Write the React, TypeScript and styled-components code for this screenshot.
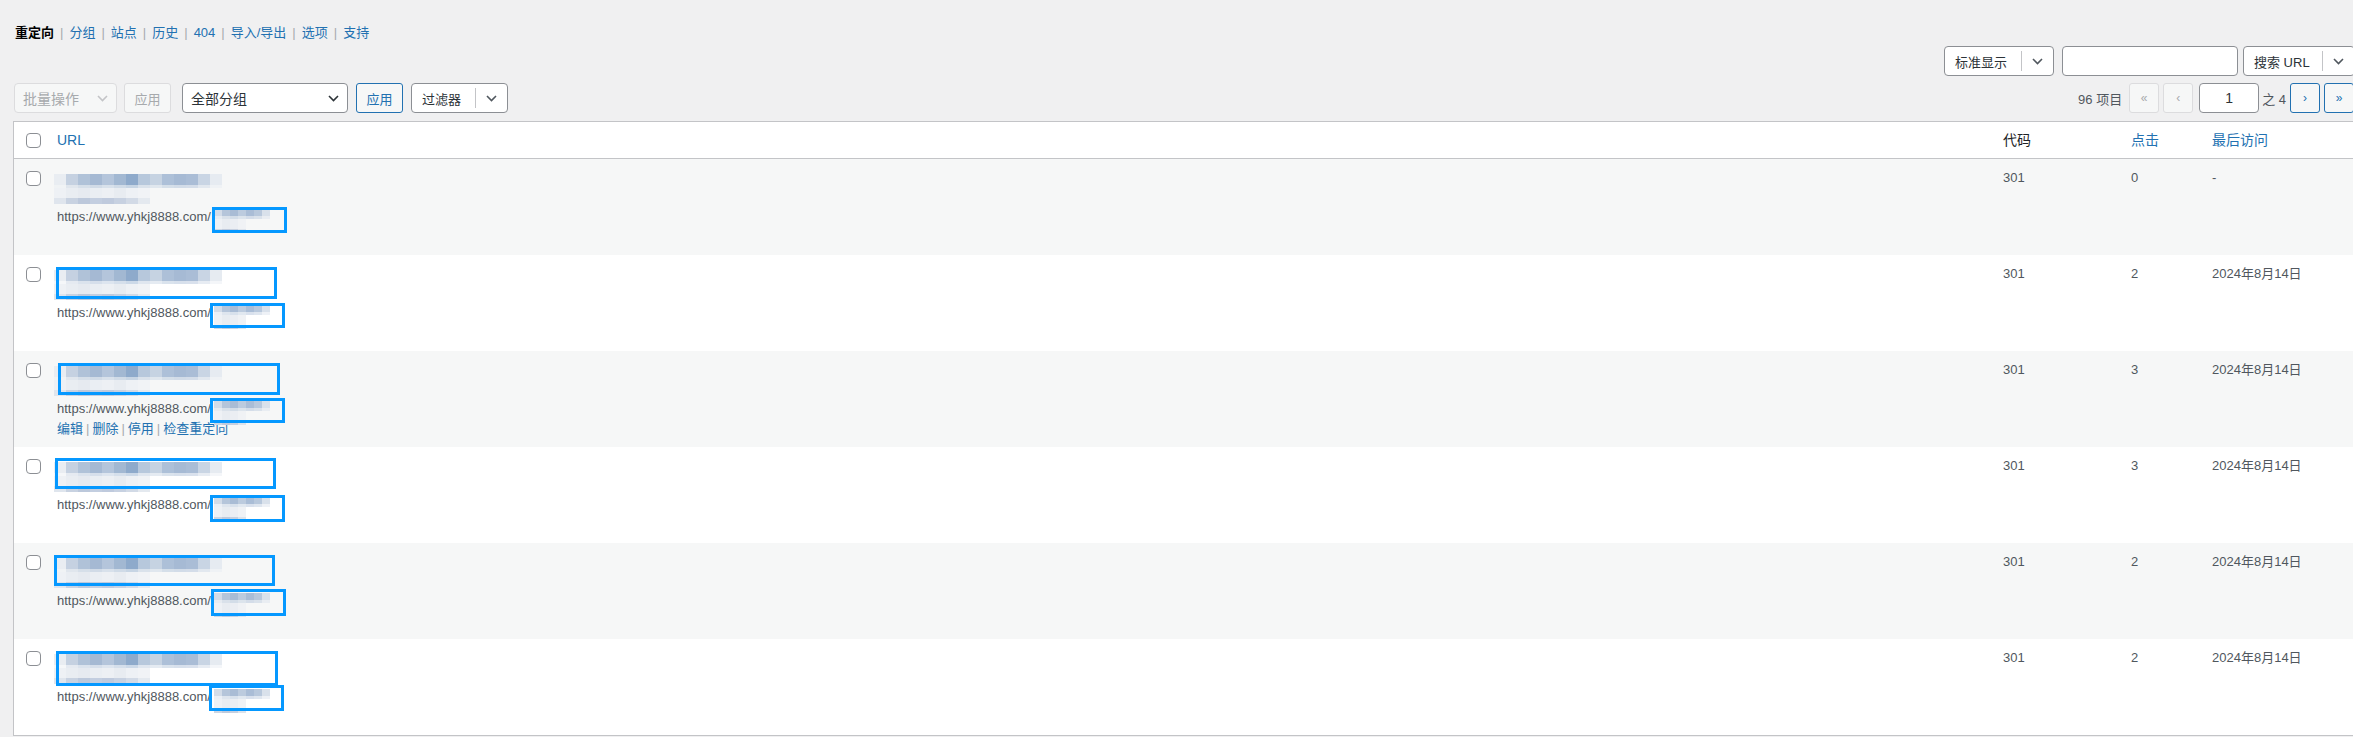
import React from "react";
import styled, { createGlobalStyle } from "styled-components";

const GlobalStyle = createGlobalStyle`
  html, body {
    margin: 0;
    padding: 0;
    background: #f0f0f1;
    overflow: hidden;
  }
  body {
    font-family: "Liberation Sans", "Noto Sans CJK SC", sans-serif;
    font-size: 13px;
    color: #3c434a;
  }
  * {
    box-sizing: border-box;
  }
`;

const Wrap = styled.div`
  width: 2355px;
  padding-left: 13px;
`;

const SubNav = styled.ul`
  display: flex;
  list-style: none;
  margin: 23px 0 0 2px;
  padding: 0;
  height: 20px;
  line-height: 20px;
  font-size: 13px;
`;

const NavLink = styled.a<{ $current?: boolean }>`
  color: ${({ $current }) => ($current ? "#000" : "#2271b1")};
  font-weight: ${({ $current }) => ($current ? 600 : 400)};
  text-decoration: none;
`;

const NavSep = styled.span`
  color: #a7aaad;
  padding: 0 6px;
`;

const SearchRow = styled.div`
  display: flex;
  justify-content: flex-end;
  gap: 8px;
  margin-top: 3px;
  height: 30px;
`;

const SearchBox = styled.div`
  display: flex;
  gap: 5px;
`;

const TextInput = styled.div<{ $w: number; $center?: boolean }>`
  display: flex;
  align-items: center;
  justify-content: ${({ $center }) => ($center ? "center" : "flex-start")};
  width: ${({ $w }) => $w}px;
  height: 30px;
  border: 1px solid #8c8f94;
  border-radius: 4px;
  background: #fff;
  color: #2c3338;
  font-size: 14px;
`;

const Split = styled.div<{ $w: number }>`
  display: flex;
  align-items: center;
  width: ${({ $w }) => $w}px;
  height: 30px;
  border: 1px solid #8c8f94;
  border-radius: 4px;
  background: #fff;
  color: #2c3338;
  font-size: 13px;
`;

const SplitLabel = styled.span`
  flex: 1;
  padding-left: 10px;
  white-space: nowrap;
`;

const SplitArrow = styled.span`
  display: flex;
  align-items: center;
  justify-content: center;
  width: 32px;
  height: 20px;
  border-left: 1px solid #c3c4c7;
`;

const TableNav = styled.div`
  display: flex;
  justify-content: space-between;
  align-items: center;
  margin-top: 7px;
  height: 30px;
`;

const NavGroup = styled.div<{ $gap: number }>`
  display: flex;
  align-items: center;
  gap: ${({ $gap }) => $gap}px;
`;

const LeftActions = styled.div`
  display: flex;
  align-items: center;
  gap: 11px;
  margin-left: 1px;
`;

const SelectBox = styled.div<{ $w: number; $disabled?: boolean }>`
  display: flex;
  align-items: center;
  justify-content: space-between;
  width: ${({ $w }) => $w}px;
  height: 30px;
  padding: 0 8px;
  border: 1px solid ${({ $disabled }) => ($disabled ? "#dcdcde" : "#8c8f94")};
  border-radius: 4px;
  background: ${({ $disabled }) => ($disabled ? "#f6f7f7" : "#fff")};
  color: ${({ $disabled }) => ($disabled ? "#a7aaad" : "#2c3338")};
  font-size: 14px;
  white-space: nowrap;
`;

const Btn = styled.button<{ $disabled?: boolean }>`
  height: 30px;
  width: 47px;
  padding: 0;
  border: 1px solid ${({ $disabled }) => ($disabled ? "#dcdcde" : "#2271b1")};
  border-radius: 3px;
  background: #f6f7f7;
  color: ${({ $disabled }) => ($disabled ? "#a7aaad" : "#2271b1")};
  font-family: inherit;
  font-size: 13px;
`;

const Pagination = styled.div`
  display: flex;
  align-items: center;
  margin-right: 1px;
  color: #50575e;
  font-size: 13px;
`;

const Count = styled.span`
  margin-right: 7px;
`;

const PageBtn = styled.span<{ $disabled?: boolean; $ml: number }>`
  display: inline-flex;
  align-items: center;
  justify-content: center;
  width: 30px;
  height: 30px;
  margin-left: ${({ $ml }) => $ml}px;
  border: 1px solid ${({ $disabled }) => ($disabled ? "#dcdcde" : "#2271b1")};
  border-radius: 3px;
  background: #f6f7f7;
  color: ${({ $disabled }) => ($disabled ? "#a7aaad" : "#2271b1")};
  font-size: 12px;
`;

const PageOf = styled.span`
  margin: 0 4px 0 3px;
  white-space: nowrap;
`;

const PageInputWrap = styled.span`
  margin-left: 6px;
`;

const Table = styled.table`
  width: 100%;
  margin-top: 8px;
  table-layout: fixed;
  border-collapse: separate;
  border-spacing: 0;
  border: 1px solid #c3c4c7;
  background: #fff;
`;

const Th = styled.th<{ $link?: boolean }>`
  text-align: left;
  font-weight: 400;
  font-size: 14px;
  padding: 8px 10px;
  border-bottom: 1px solid #c3c4c7;
  color: ${({ $link }) => ($link ? "#2271b1" : "#1d2327")};
`;

const HeadText = styled.span`
  display: block;
  height: 20px;
  line-height: 20px;
`;

const CheckTh = styled.th`
  padding: 11px 0 0 12px;
  vertical-align: top;
  border-bottom: 1px solid #c3c4c7;
`;

const Tr = styled.tr<{ $alt: boolean }>`
  background: ${({ $alt }) => ($alt ? "#f6f7f7" : "#fff")};
`;

const Td = styled.td`
  padding: 9px 10px;
  line-height: 19.5px;
  vertical-align: top;
  color: #50575e;
  font-size: 13px;
`;

const CheckTd = styled.td`
  padding: 12px 0 0 12px;
  vertical-align: top;
`;

const Check = styled.span`
  display: block;
  width: 15px;
  height: 15px;
  border: 1px solid #8c8f94;
  border-radius: 4px;
  background: #fff;
`;

const TitleBlock = styled.div`
  position: relative;
  display: flow-root;
  height: 39px;
`;

const BlurPic = styled.svg<{ $top: number; $left: number }>`
  display: block;
  margin: ${({ $top, $left }) => `${$top}px 0 0 ${$left}px`};
`;

const Mark = styled.span<{ $l: number; $t: number; $w: number; $h: number }>`
  position: absolute;
  left: ${({ $l }) => $l}px;
  top: ${({ $t }) => $t}px;
  width: ${({ $w }) => $w}px;
  height: ${({ $h }) => $h}px;
  border: 3px solid #0598ff;
`;

const UrlLine = styled.div`
  height: 19.5px;
  white-space: nowrap;
`;

const Slug = styled.span`
  position: relative;
  display: inline-block;
  vertical-align: top;
  width: 60px;
  height: 19.5px;
`;

const RowActions = styled.div<{ $visible: boolean }>`
  height: 19.5px;
  visibility: ${({ $visible }) => ($visible ? "visible" : "hidden")};
  color: #2271b1;
  white-space: nowrap;
`;

const ActSep = styled.span`
  color: #a7aaad;
  padding: 0 3px;
`;

const Chevron = ({ color = "#50575e" }: { color?: string }) => (
  <svg width="11" height="7" viewBox="0 0 11 7">
    <path d="M1 1l4.5 4.5L10 1" fill="none" stroke={color} strokeWidth="1.6" />
  </svg>
);

const TITLE_TOP = [
  "#e9edf2", "#c5d1e1", "#b0c2d8", "#a5b9d3", "#b4c5db", "#a2b8d2", "#8eaacb",
  "#b7c8dc", "#c6d3e2", "#adc0d8", "#a6bad4", "#aabdd6", "#c9d5e4", "#e6ebf1",
];
const TITLE_MID = ["#eef1f5", "#e9edf2", "#e6eaf0", "#eaeef3", "#edf0f4", "#e8ecf1", "#eef1f5", "#f1f3f6"];
const TITLE_BOT = ["#dfe5ed", "#c8d2e1", "#bcc8db", "#c3cee0", "#bfcadd", "#c7d1e1", "#d2dae6", "#e4e9ef"];

const SLUG_TOP = ["#d3dce8", "#b5c5da", "#a9bcd5", "#bccbde", "#aabdd6", "#b8c8dc", "#d9e1eb"];
const SLUG_MID = ["#eef1f5", "#e8ecf1", "#ebeef3", "#f0f2f5"];
const SLUG_BOT = ["#cdd6e3", "#bfcadc", "#c6d0e0", "#dde3eb"];

// pixelated (blurred) text as in the screenshot
const Pixels = ({
  bands,
  cell,
}: {
  bands: { colors: string[]; y: number; h: number; opacity?: number }[];
  cell: number;
}) => (
  <>
    {bands.map((b, bi) =>
      b.colors.map((c, i) => (
        <rect key={`${bi}-${i}`} x={i * cell} y={b.y} width={cell} height={b.h} fill={c} opacity={b.opacity ?? 1} />
      )),
    )}
  </>
);

const TitleBlur = () => (
  <BlurPic $top={6} $left={-3} width="168" height="30" viewBox="0 0 168 30">
    <Pixels
      cell={12}
      bands={[
        { colors: TITLE_TOP, y: 0, h: 11 },
        { colors: TITLE_TOP, y: 11, h: 3, opacity: 0.45 },
        { colors: TITLE_MID, y: 14, h: 10 },
        { colors: TITLE_BOT, y: 24, h: 6 },
      ]}
    />
  </BlurPic>
);

const SlugBlur = () => (
  <BlurPic $top={2} $left={3} width="56" height="24" viewBox="0 0 56 24">
    <Pixels
      cell={8}
      bands={[
        { colors: SLUG_TOP, y: 0, h: 7 },
        { colors: SLUG_TOP, y: 7, h: 3, opacity: 0.45 },
        { colors: SLUG_MID, y: 10, h: 10 },
        { colors: SLUG_BOT, y: 20, h: 4 },
      ]}
    />
  </BlurPic>
);

type Box = { l: number; t: number; w: number; h: number };

interface Row {
  hits: number;
  last: string;
  title?: Box;
  slug: Box;
}

const rows: Row[] = [
  { hits: 0, last: "-", slug: { l: 1, t: 0, w: 75, h: 26 } },
  { hits: 2, last: "2024年8月14日", title: { l: -1, t: 3, w: 221, h: 32 }, slug: { l: -1, t: 0, w: 75, h: 25 } },
  { hits: 3, last: "2024年8月14日", title: { l: 1, t: 3, w: 222, h: 32 }, slug: { l: -1, t: -1, w: 75, h: 25 } },
  { hits: 3, last: "2024年8月14日", title: { l: -2, t: 2, w: 221, h: 31 }, slug: { l: -1, t: 0, w: 75, h: 27 } },
  { hits: 2, last: "2024年8月14日", title: { l: -3, t: 3, w: 221, h: 31 }, slug: { l: 0, t: -2, w: 75, h: 27 } },
  { hits: 2, last: "2024年8月14日", title: { l: -1, t: 3, w: 222, h: 35 }, slug: { l: -2, t: -2, w: 75, h: 26 } },
];

const navItems = ["分组", "站点", "历史", "404", "导入/导出", "选项", "支持"];
const rowActions = ["编辑", "删除", "停用", "检查重定向"];

export default function App() {
  return (
    <Wrap>
      <GlobalStyle />
      <SubNav>
        <li>
          <NavLink $current>重定向</NavLink>
        </li>
        {navItems.map((item) => (
          <li key={item}>
            <NavSep>|</NavSep>
            <NavLink>{item}</NavLink>
          </li>
        ))}
      </SubNav>

      <SearchRow>
        <Split $w={110}>
          <SplitLabel>标准显示</SplitLabel>
          <SplitArrow>
            <Chevron />
          </SplitArrow>
        </Split>
        <SearchBox>
          <TextInput $w={176} />
          <Split $w={112}>
            <SplitLabel>搜索 URL</SplitLabel>
            <SplitArrow>
              <Chevron />
            </SplitArrow>
          </Split>
        </SearchBox>
      </SearchRow>

      <TableNav>
        <LeftActions>
          <NavGroup $gap={7}>
            <SelectBox $w={103} $disabled>
              批量操作
              <Chevron color="#c3c4c7" />
            </SelectBox>
            <Btn $disabled>应用</Btn>
          </NavGroup>
          <NavGroup $gap={8}>
            <SelectBox $w={166}>
              全部分组
              <Chevron color="#2c3338" />
            </SelectBox>
            <Btn>应用</Btn>
            <Split $w={97}>
              <SplitLabel>过滤器</SplitLabel>
              <SplitArrow>
                <Chevron />
              </SplitArrow>
            </Split>
          </NavGroup>
        </LeftActions>
        <Pagination>
          <Count>96 项目</Count>
          <PageBtn $disabled $ml={0}>«</PageBtn>
          <PageBtn $disabled $ml={4}>‹</PageBtn>
          <PageInputWrap>
            <TextInput $w={60} $center>
              1
            </TextInput>
          </PageInputWrap>
          <PageOf>之 4</PageOf>
          <PageBtn $ml={0}>›</PageBtn>
          <PageBtn $ml={4}>»</PageBtn>
        </Pagination>
      </TableNav>

      <Table>
        <colgroup>
          <col style={{ width: 33 }} />
          <col />
          <col style={{ width: 128 }} />
          <col style={{ width: 81 }} />
          <col style={{ width: 152 }} />
        </colgroup>
        <thead>
          <tr>
            <CheckTh>
              <Check />
            </CheckTh>
            <Th $link>
              <HeadText>URL</HeadText>
            </Th>
            <Th>
              <HeadText>代码</HeadText>
            </Th>
            <Th $link>
              <HeadText>点击</HeadText>
            </Th>
            <Th $link>
              <HeadText>最后访问</HeadText>
            </Th>
          </tr>
        </thead>
        <tbody>
          {rows.map((row, i) => (
            <Tr key={i} $alt={i % 2 === 0}>
              <CheckTd>
                <Check />
              </CheckTd>
              <Td>
                <TitleBlock>
                  <TitleBlur />
                  {row.title && <Mark $l={row.title.l} $t={row.title.t} $w={row.title.w} $h={row.title.h} />}
                </TitleBlock>
                <UrlLine>
                  https://www.yhkj8888.com/
                  <Slug>
                    <SlugBlur />
                    <Mark $l={row.slug.l} $t={row.slug.t} $w={row.slug.w} $h={row.slug.h} />
                  </Slug>
                </UrlLine>
                <RowActions $visible={i === 2}>
                  {rowActions.map((a, j) => (
                    <React.Fragment key={a}>
                      {j > 0 && <ActSep>|</ActSep>}
                      {a}
                    </React.Fragment>
                  ))}
                </RowActions>
              </Td>
              <Td>301</Td>
              <Td>{row.hits}</Td>
              <Td>{row.last}</Td>
            </Tr>
          ))}
        </tbody>
      </Table>
    </Wrap>
  );
}
